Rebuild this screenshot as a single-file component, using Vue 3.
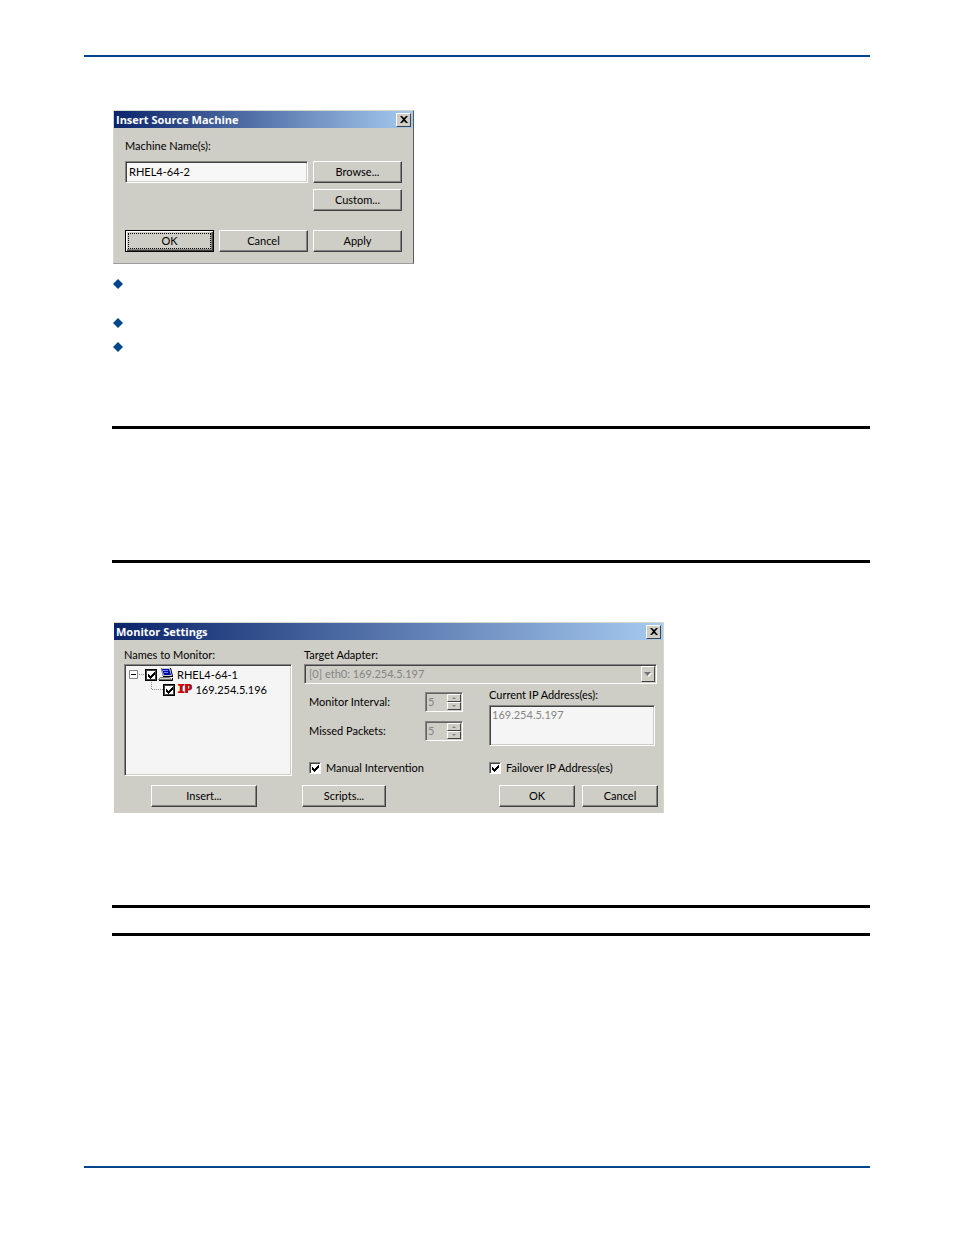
<script setup>
import { reactive } from "vue";

const steps = [{ lines: 2 }, { lines: 1 }, { lines: 1 }];

const source = reactive({ name: "RHEL4-64-2" });

const monitor = reactive({
  server: true,
  address: true,
  interval: "5",
  missed: "5",
  manual: true,
  failover: true,
  current: "169.254.5.197",
});
</script>

<template>
  <div class="page">
    <header class="page-rule"></header>

    <main class="content">
      <section class="dialog source">
        <div class="titlebar">
          <h2>Insert Source Machine</h2>
          <button class="close" aria-label="Close">
            <svg viewBox="0 0 8 7" width="8" height="7">
              <path d="M0 0h2l2 2 2-2h2L5 3.500 8 7H6L4 5 2 7H0l3-3.500z" />
            </svg>
          </button>
        </div>
        <div class="source-body">
          <label for="machine">Machine Name(s):</label>
          <div class="source-grid">
            <input id="machine" v-model="source.name" class="field" type="text" />
            <button class="btn">Browse...</button>
            <button class="btn custom">Custom...</button>
          </div>
          <div class="source-grid actions">
            <button class="btn default"><span>OK</span></button>
            <button class="btn">Cancel</button>
            <button class="btn">Apply</button>
          </div>
        </div>
      </section>

      <ul class="steps">
        <li v-for="(step, index) in steps" :key="index" :class="{ tall: step.lines > 1 }">
          <svg viewBox="0 0 10 10" width="10" height="10">
            <path d="M5 0l5 5-5 5-5-5z" fill="#00468c" />
          </svg>
        </li>
      </ul>

      <section class="note large"></section>

      <section class="dialog monitor">
        <div class="titlebar">
          <h2>Monitor Settings</h2>
          <button class="close" aria-label="Close">
            <svg viewBox="0 0 8 7" width="8" height="7">
              <path d="M0 0h2l2 2 2-2h2L5 3.500 8 7H6L4 5 2 7H0l3-3.500z" />
            </svg>
          </button>
        </div>
        <div class="monitor-body">
          <div class="names">
            <h3>Names to Monitor:</h3>
            <ul class="tree">
              <li>
                <svg class="branch" viewBox="0 0 16 15" width="16" height="15">
                  <path d="M.5 3.500h8v8h-8z" fill="#fff" stroke="#848484" />
                  <path d="M2 7.500h5" stroke="#000" />
                  <path d="M10 7.500h6" stroke="#848484" stroke-dasharray="1 1" />
                </svg>
                <input id="server" v-model="monitor.server" type="checkbox" class="tick flat" />
                <svg class="computer" viewBox="0 0 16 15" width="16" height="15">
                  <path d="M3 1h9l2 8H5z" fill="#c6c6c6" />
                  <path d="M3.500 1v2l1.500 6" fill="none" stroke="#848484" />
                  <path d="M4 2h7l2 6H6z" fill="#0000b5" />
                  <path d="M5 3h5v1H5zM6 5h4v1H6z" fill="#5a8cff" />
                  <path d="M12 1h1l2 8v1H5V9h9z" fill="#000" />
                  <path d="M2.500 10.500h9l2 2h-13z" fill="#d6d6ce" stroke="#737373" />
                  <path d="M1 13.500h13.500V11" fill="none" stroke="#000" />
                </svg>
                <label for="server">RHEL4-64-1</label>
              </li>
              <li class="child">
                <svg class="branch" viewBox="0 0 12 15" width="12" height="15">
                  <path d="M.5 0v7.500H12" fill="none" stroke="#848484" stroke-dasharray="1 1" />
                </svg>
                <input id="address" v-model="monitor.address" type="checkbox" class="tick flat" />
                <span class="ip">IP</span>
                <label for="address">169.254.5.196</label>
              </li>
            </ul>
          </div>

          <div class="settings">
            <label for="adapter">Target Adapter:</label>
            <div class="combo">
              <select id="adapter" disabled>
                <option>[0] eth0: 169.254.5.197</option>
              </select>
              <span class="drop">
                <svg viewBox="0 0 8 5" width="8" height="5">
                  <path d="M1 1h7L4.500 5z" fill="#fff" />
                  <path d="M0 0h7L3.500 4z" fill="#737373" />
                </svg>
              </span>
            </div>
            <div class="options">
              <div class="timing">
                <div class="row">
                  <label for="interval">Monitor Interval:</label>
                  <div class="spinner">
                    <input id="interval" v-model="monitor.interval" type="text" disabled />
                    <button disabled aria-label="More"><i class="up"></i></button>
                    <button disabled aria-label="Less"><i class="down"></i></button>
                  </div>
                </div>
                <div class="row">
                  <label for="missed">Missed Packets:</label>
                  <div class="spinner">
                    <input id="missed" v-model="monitor.missed" type="text" disabled />
                    <button disabled aria-label="More"><i class="up"></i></button>
                    <button disabled aria-label="Less"><i class="down"></i></button>
                  </div>
                </div>
                <div class="check">
                  <input id="manual" v-model="monitor.manual" type="checkbox" class="tick" />
                  <label for="manual">Manual Intervention</label>
                </div>
              </div>
              <div class="addresses">
                <label for="current">Current IP Address(es):</label>
                <textarea id="current" v-model="monitor.current" disabled></textarea>
                <div class="check">
                  <input id="failover" v-model="monitor.failover" type="checkbox" class="tick" />
                  <label for="failover">Failover IP Address(es)</label>
                </div>
              </div>
            </div>
          </div>
        </div>
        <div class="monitor-actions">
          <button class="btn insert">Insert...</button>
          <button class="btn scripts">Scripts...</button>
          <button class="btn ok">OK</button>
          <button class="btn cancel">Cancel</button>
        </div>
      </section>

      <section class="note small"></section>
    </main>

    <footer class="page-rule bottom"></footer>
  </div>
</template>

<style>
body {
  margin: 0;
  background: #fff;
}
</style>

<style scoped>
* {
  box-sizing: border-box;
}

.page {
  min-height: 100vh;
  display: flex;
  flex-direction: column;
  padding: 55px 84px 67px;
  font-family: Lato, Roboto, sans-serif;
  font-size: 11px;
  line-height: 14px;
  color: #000;
}

.page-rule {
  height: 2px;
  background: #00468c;
}

.page-rule.bottom {
  margin-top: auto;
}

.content {
  padding: 53px 0 0 28px;
}

h2,
h3 {
  margin: 0;
  font-size: 11px;
  font-weight: normal;
}

label,
h3 {
  display: block;
  white-space: nowrap;
}

ul {
  margin: 0;
  padding: 0;
  list-style: none;
}

button,
input,
select,
textarea {
  margin: 0;
  padding: 0;
  font: inherit;
  color: inherit;
  border-radius: 0;
}

svg {
  display: block;
  flex: none;
}

.dialog {
  max-width: 100%;
  background: #cfcec6;
  border: 1px solid #d6d5ce;
}

.titlebar {
  height: 17px;
  display: flex;
  align-items: center;
  justify-content: space-between;
  padding: 0 2px;
  background: linear-gradient(to right, #0a246a, #a6caf0);
}

.titlebar h2 {
  font-family: "Open Sans", "Noto Sans", sans-serif;
  font-weight: bold;
  color: #fff;
}

.close {
  width: 15px;
  height: 14px;
  display: flex;
  align-items: center;
  justify-content: center;
  background: #cfcec6;
  border: 1px solid;
  border-color: #fff #424242 #424242 #fff;
}

.btn {
  height: 22px;
  background: #cfcec6;
  border: 1px solid;
  border-color: #fff #424242 #424242 #fff;
  box-shadow: inset -1px -1px #848484;
}

.btn.default {
  padding: 2px;
  border-color: #000;
  box-shadow: inset 1px 1px #fff, inset -1px -1px #424242, inset -2px -2px #848484;
}

.btn.default span {
  display: block;
  line-height: 14px;
  border: 1px dotted #000;
}

.field {
  padding: 0 3px;
  background: #f7f7f7;
  border: 1px solid;
  border-color: #848484 #fff #fff #848484;
  box-shadow: inset 1px 1px #424242, inset -1px -1px #cfcec6;
}

.source {
  width: 301px;
  margin-left: 1px;
  border-right-color: #5a5a5a;
  border-bottom-color: #9c9c9c;
}

.source-body {
  padding: 11px;
}

.source-grid {
  display: grid;
  grid-template-columns: repeat(3, 1fr);
  gap: 6px 5px;
  margin-top: 8px;
}

.source-grid .field {
  grid-column: span 2;
  width: 100%;
}

.custom {
  grid-column: 3;
}

.source-grid.actions {
  margin-top: 19px;
}

.steps {
  padding: 13px 0 0 1px;
}

.steps li {
  min-height: 15px;
  margin-bottom: 9px;
  padding-top: 2px;
}

.steps .tall {
  min-height: 30px;
}

.note {
  border: solid #000;
  border-width: 3px 0;
}

.note.large {
  margin-top: 71px;
  padding: 65px 0 66px;
}

.note.small {
  margin-top: 92px;
  padding: 12px 0 13px;
}

.monitor {
  width: 550px;
  margin: 59px 0 0 2px;
  border-width: 1px 1px 0 0;
}

.monitor-body {
  display: grid;
  grid-template-columns: 168px 1fr;
  gap: 12px;
  padding: 8px 6px 0 10px;
}

.tree {
  height: 112px;
  margin-top: 2px;
  padding: 2px 4px;
  background: #f5f5f5;
  border: 1px solid;
  border-color: #848484 #fff #fff #848484;
  box-shadow: inset 1px 1px #424242, inset -1px -1px #cfcec6;
}

.tree li {
  height: 15px;
  display: flex;
  align-items: center;
}

.tree .child {
  padding-left: 22px;
}

.tree label {
  margin-left: 3px;
}

.computer {
  margin-left: 1px;
}

.ip {
  margin: 0 1px 0 2px;
  font: bold 12px/14px "Liberation Mono", monospace;
  color: #e00000;
  text-shadow: 1px 0 #400000;
}

.tick {
  appearance: none;
  flex: none;
  width: 12px;
  height: 12px;
  background: #fff;
  border: 1px solid;
  border-color: #848484 #fff #fff #848484;
  box-shadow: inset 1px 1px #424242;
}

.tick:checked {
  background: #fff
    url("data:image/svg+xml,%3Csvg xmlns='http://www.w3.org/2000/svg' viewBox='0 0 7 7' width='7' height='7'%3E%3Cpath d='M0 2h1v1h1v1h1v-1h1v-1h1v-1h1v-1h1v3h-1v1h-1v1h-1v1h-1v1h-1v-1h-1v-1h-1z'/%3E%3C/svg%3E")
    2px 2px / 7px 7px no-repeat;
}

.tick.flat {
  border-color: #000;
  box-shadow: inset 0 0 0 1px #424242;
}

.combo {
  height: 20px;
  display: flex;
  margin-top: 2px;
  border: 1px solid;
  border-color: #848484 #fff #fff #848484;
  box-shadow: inset 1px 1px #424242;
}

.combo select {
  appearance: none;
  flex: 1;
  min-width: 0;
  padding-left: 4px;
  background: transparent;
  border: 0;
  color: #848484;
  opacity: 1;
}

.drop {
  width: 14px;
  margin: 1px 1px 1px 0;
  display: flex;
  align-items: center;
  justify-content: center;
  border: 1px solid;
  border-color: #fff #424242 #424242 #fff;
}

.options {
  display: grid;
  grid-template-columns: 154px 166px;
  justify-content: space-between;
  padding: 0 2px 0 5px;
}

.timing {
  padding-top: 8px;
}

.row {
  display: flex;
  align-items: center;
  justify-content: space-between;
  margin-bottom: 9px;
}

.timing .check {
  margin-top: 20px;
}

.spinner {
  width: 38px;
  height: 20px;
  display: grid;
  grid-template: 1fr 1fr / 1fr 14px;
  padding: 1px;
  border: 1px solid;
  border-color: #848484 #fff #fff #848484;
  box-shadow: inset 1px 1px #636363;
}

.spinner input {
  grid-row: span 2;
  width: 100%;
  min-width: 0;
  padding-left: 1px;
  background: transparent;
  border: 0;
  color: #848484;
}

.spinner button {
  display: flex;
  align-items: center;
  justify-content: center;
  background: #cfcec6;
  border: 1px solid;
  border-color: #fff #424242 #424242 #fff;
}

.spinner i {
  border: 2px solid transparent;
}

.spinner .up {
  border-top-width: 0;
  border-bottom-color: #848484;
}

.spinner .down {
  border-bottom-width: 0;
  border-top-color: #848484;
}

.addresses {
  padding-top: 4px;
}

.addresses textarea {
  display: block;
  width: 100%;
  height: 41px;
  margin: 3px 0 15px;
  padding: 2px;
  resize: none;
  color: #848484;
  background: #f5f5f5;
  border: 1px solid;
  border-color: #848484 #fff #fff #848484;
  box-shadow: inset 1px 1px #424242, inset -1px -1px #cfcec6;
}

.check {
  display: flex;
  align-items: center;
  gap: 5px;
}

.monitor-actions {
  display: flex;
  padding: 9px 5px 6px 37px;
}

.insert {
  width: 106px;
}

.scripts {
  width: 84px;
  margin-left: 45px;
}

.ok,
.cancel {
  width: 76px;
}

.ok {
  margin-left: auto;
}

.cancel {
  margin-left: 7px;
}
</style>
